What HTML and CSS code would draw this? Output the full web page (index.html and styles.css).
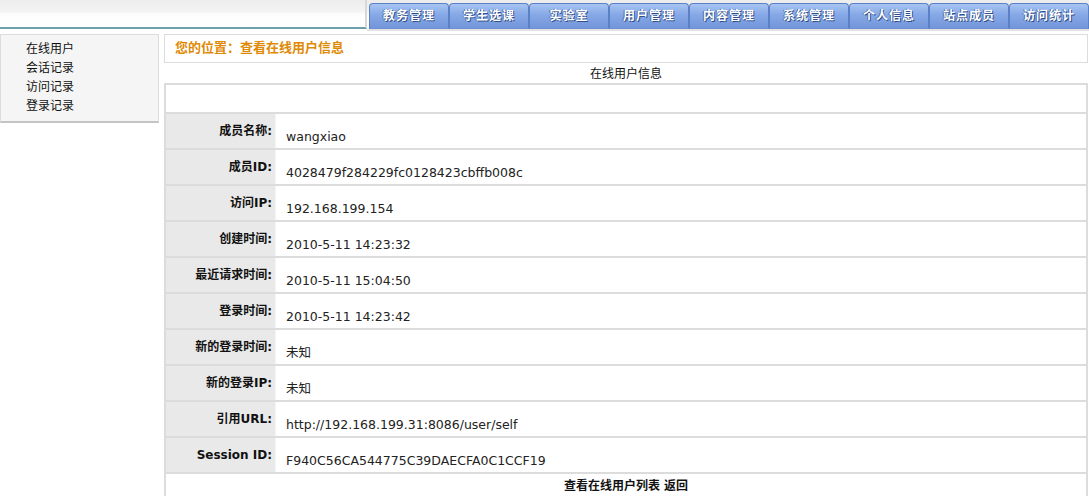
FILE: index.html
```html
<!DOCTYPE html>
<html lang="zh-CN">
<head>
    <meta charset="UTF-8">
    <title>查看在线用户信息</title>
    <link rel="stylesheet" href="styles.css">
</head>
<body>
    <div class="header">
        <div class="logo"></div>
        <ul class="nav">
            <li>教务管理</li>
            <li>学生选课</li>
            <li>实验室</li>
            <li>用户管理</li>
            <li>内容管理</li>
            <li>系统管理</li>
            <li>个人信息</li>
            <li>站点成员</li>
            <li>访问统计</li>
        </ul>
    </div>

    <div class="wrap">
        <div class="side">
            <ul class="menu">
                <li>在线用户</li>
                <li>会话记录</li>
                <li>访问记录</li>
                <li>登录记录</li>
            </ul>
        </div>

        <div class="main">
            <div class="crumb">您的位置：查看在线用户信息</div>
            <div class="title">在线用户信息</div>
            <table class="info">
                <tr class="blank"><td colspan="2"></td></tr>
                <tr><th>成员名称:</th><td>wangxiao</td></tr>
                <tr><th>成员ID:</th><td>4028479f284229fc0128423cbffb008c</td></tr>
                <tr><th>访问IP:</th><td>192.168.199.154</td></tr>
                <tr><th>创建时间:</th><td>2010-5-11 14:23:32</td></tr>
                <tr><th>最近请求时间:</th><td>2010-5-11 15:04:50</td></tr>
                <tr><th>登录时间:</th><td>2010-5-11 14:23:42</td></tr>
                <tr><th>新的登录时间:</th><td>未知</td></tr>
                <tr><th>新的登录IP:</th><td>未知</td></tr>
                <tr><th>引用URL:</th><td>http://192.168.199.31:8086/user/self</td></tr>
                <tr><th>Session ID:</th><td>F940C56CA544775C39DAECFA0C1CCF19</td></tr>
                <tr class="foot"><td colspan="2"><a>查看在线用户列表</a> <a>返回</a></td></tr>
            </table>
        </div>
    </div>
</body>
</html>
```

FILE: styles.css
```css
body {
    margin: 0;
    font-family: "DejaVu Sans", "Noto Sans CJK SC", sans-serif;
    font-size: 12px;
    color: #111;
    background: #fff;
}
ul {
    list-style: none;
    margin: 0;
    padding: 0;
}

.header {
    display: flex;
    height: 29px;
    background: linear-gradient(#ececec 0, #f4f4f4 12px, #fdfdfd 14px, #fff 100%);
}
.logo {
    width: 368px;
    border-bottom: 2px solid #6c9fa9;
    border-right: 2px solid #d8d8d8;
    box-sizing: border-box;
}
.nav {
    display: flex;
    padding: 3px 0 0 2px;
    border-bottom: 2px solid #e2e2e2;
    box-sizing: border-box;
    height: 31px;
}
.nav li {
    width: 78px;
    height: 24px;
    line-height: 24px;
    text-align: center;
    font-weight: bold;
    font-size: 12px;
    color: #fff;
    text-shadow: 1px 1px 0 #2f4f8a, -1px 0 0 #4a6cae;
    letter-spacing: 1px;
    background: linear-gradient(#a7c4f2, #86a8e6 45%, #7396da);
    border: 1px solid #5a80c6;
    border-bottom-color: #6d90d4;
    border-radius: 4px 4px 0 0;
}

.wrap {
    display: flex;
    padding-top: 5px;
}
.side {
    width: 159px;
    flex: none;
}
.menu {
    background: #f5f5f5;
    border: 1px solid #dcdcdc;
    border-bottom: 2px solid #c4c4c4;
    padding: 5px 0 5px 25px;
}
.menu li {
    line-height: 19px;
    font-size: 12px;
    color: #111;
}

.main {
    flex: 1;
    margin: 0 1px 0 5px;
}
.crumb {
    border: 1px solid #dcdcdc;
    height: 27px;
    line-height: 25px;
    padding-left: 10px;
    font-size: 13px;
    font-weight: bold;
    color: #df8a06;
}
.title {
    text-align: center;
    height: 20px;
    line-height: 22px;
}

.info {
    width: 100%;
    border-collapse: collapse;
    border: 2px solid #dcdcdc;
}
.info td,
.info th {
    border-top: 2px solid #dcdcdc;
    vertical-align: top;
    line-height: 15px;
}
.info th {
    width: 98px;
    height: 24px;
    background: #e9e9e9;
    text-align: right;
    padding: 10px 3px 0 8px;
    font-weight: bold;
    font-size: 12px;
    border-right: 1px solid #f4f4f4;
}
.info td {
    height: 19px;
    padding: 15px 0 0 10px;
    font-size: 12.5px;
    color: #222;
}
.info .blank td {
    height: 27px;
    padding: 0;
}
.info .foot td {
    text-align: center;
    font-weight: bold;
    font-size: 12px;
    padding: 5px 0 0;
    height: 20px;
}
.foot a {
    color: #111;
    cursor: pointer;
}
```
